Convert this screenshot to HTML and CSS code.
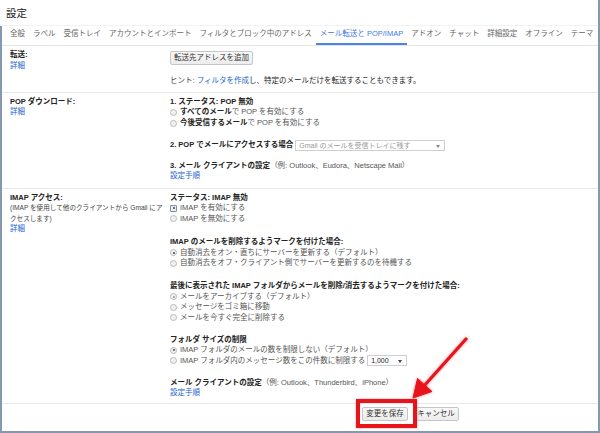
FILE: index.html
```html
<!DOCTYPE html>
<html lang="ja">
<head>
<meta charset="utf-8">
<title>設定</title>
<link rel="stylesheet" href="styles.css">
</head>
<body>
<div class="page">
  <header class="title">設定</header>
  <div class="frame">
    <nav class="tabs">
      <span class="tab">全般</span>
      <span class="tab">ラベル</span>
      <span class="tab">受信トレイ</span>
      <span class="tab">アカウントとインポート</span>
      <span class="tab">フィルタとブロック中のアドレス</span>
      <span class="tab active">メール転送と POP/IMAP</span>
      <span class="tab">アドオン</span>
      <span class="tab">チャット</span>
      <span class="tab">詳細設定</span>
      <span class="tab">オフライン</span>
      <span class="tab">テーマ</span>
    </nav>

    <section class="row row-fwd">
      <div class="label">
        <b>転送:</b>
        <a class="link">詳細</a>
      </div>
      <div class="content">
        <button class="btn btn-add">転送先アドレスを追加</button>
        <p class="hint">ヒント: <a class="link">フィルタを作成</a><span class="dark">し、特定のメールだけを転送することもできます。</span></p>
      </div>
    </section>

    <section class="row row-pop">
      <div class="label">
        <b>POP ダウンロード:</b>
        <a class="link">詳細</a>
      </div>
      <div class="content">
        <p class="line"><b>1. ステータス: POP 無効</b></p>
        <p class="opt"><span class="radio"></span><b>すべてのメール</b>で POP を有効にする</p>
        <p class="opt"><span class="radio"></span><b>今後受信するメール</b>で POP を有効にする</p>
        <p class="line sel-line"><b>2. POP でメールにアクセスする場合</b><span class="select select-pop">Gmail のメールを受信トレイに残す<i class="caret"></i></span></p>
        <p class="line client"><b>3. メール クライアントの設定</b><span class="note">（例: Outlook、Eudora、Netscape Mail）</span></p>
        <a class="link">設定手順</a>
      </div>
    </section>

    <section class="row row-imap">
      <div class="label">
        <b>IMAP アクセス:</b>
        <span class="desc">(IMAP を使用して他のクライアントから Gmail にアクセスします)</span>
        <a class="link">詳細</a>
      </div>
      <div class="content">
        <div class="group">
          <p class="line"><b>ステータス: IMAP 無効</b></p>
          <p class="opt"><span class="radio on focus"></span>IMAP を有効にする</p>
          <p class="opt"><span class="radio"></span>IMAP を無効にする</p>
        </div>
        <div class="group g2">
          <p class="line"><b>IMAP のメールを削除するようマークを付けた場合:</b></p>
          <p class="opt"><span class="radio on"></span>自動消去をオン・直ちにサーバーを更新する（デフォルト）</p>
          <p class="opt"><span class="radio"></span>自動消去をオフ・クライアント側でサーバーを更新するのを待機する</p>
        </div>
        <div class="group g3">
          <p class="line"><b>最後に表示された IMAP フォルダからメールを削除/消去するようマークを付けた場合:</b></p>
          <p class="opt"><span class="radio on dim"></span>メールをアーカイブする（デフォルト）</p>
          <p class="opt"><span class="radio"></span>メッセージをゴミ箱に移動</p>
          <p class="opt"><span class="radio"></span>メールを今すぐ完全に削除する</p>
        </div>
        <div class="group g4">
          <p class="line"><b>フォルダ サイズの制限</b></p>
          <p class="opt"><span class="radio on"></span>IMAP フォルダのメールの数を制限しない（デフォルト）</p>
          <p class="opt"><span class="radio"></span>IMAP フォルダ内のメッセージ数をこの件数に制限する<span class="select select-num">1,000<i class="caret"></i></span></p>
        </div>
        <div class="group g5">
          <p class="line"><b>メール クライアントの設定</b><span class="note">（例: Outlook、Thunderbird、iPhone）</span></p>
          <a class="link">設定手順</a>
        </div>
      </div>
    </section>

    <div class="actions">
      <button class="btn btn-save">変更を保存</button>
      <button class="btn btn-cancel">キャンセル</button>
    </div>
  </div>

  <div class="highlight"></div>
  <svg class="arrow" width="600" height="433" viewBox="0 0 600 433">
    <g fill="#e8141c" stroke="#e8141c" stroke-linejoin="round">
      <line x1="466" y1="339" x2="424" y2="386" stroke-width="3.2" stroke-linecap="round"/>
      <polygon points="413,398 417.5,378.5 432,391.5" stroke-width="1"/>
    </g>
  </svg>
</div>
</body>
</html>
```

FILE: styles.css
```css
* {
  box-sizing: border-box;
}

html, body {
  margin: 0;
  padding: 0;
  background: #fff;
}

body {
  font-family: "Liberation Sans", "Noto Sans CJK JP", sans-serif;
  font-size: 7.5px;
  line-height: 10.5px;
  color: #222;
}

p {
  margin: 0;
}

b {
  font-weight: bold;
  color: #222;
}

.page {
  position: relative;
  width: 600px;
  height: 433px;
  overflow: hidden;
  border-right: 2px solid #8499b0;
  border-bottom: 2px solid #8499b0;
}

.title {
  height: 26px;
  padding-left: 6px;
  font-size: 10.5px;
  line-height: 27px;
  color: #222;
  border-bottom: 1px solid #f2f2f2;
}

.frame {
  height: 405px;
  border-left: 2px solid #8499b0;
}

.tabs {
  display: flex;
  height: 20px;
  padding-left: 4px;
  border-bottom: 1px solid #e4e4e4;
  white-space: nowrap;
}

.tab {
  height: 19px;
  padding: 3px 4px 0;
  color: #666;
}

.tab.active {
  color: #3f7be6;
  border-bottom: 2px solid #4a86e8;
}

.row {
  display: flex;
  padding: 4px 0 0 8px;
  border-bottom: 1px solid #e8e8e8;
}

.label {
  display: flex;
  flex-direction: column;
  align-items: flex-start;
  width: 160px;
  flex: none;
}

.content {
  display: flex;
  flex-direction: column;
  align-items: flex-start;
  flex: 1;
  min-width: 0;
}

.link {
  color: #1a5fcf;
  text-decoration: none;
  cursor: pointer;
}

.desc {
  width: 158px;
  font-size: 6.6px;
  line-height: 10.7px;
  color: #444;
}

.row-fwd {
  padding-bottom: 5px;
}

.row-pop {
  padding-bottom: 6px;
}

.row-imap {
  padding-bottom: 4.5px;
}

.btn {
  display: block;
  height: 14px;
  padding: 0 3px;
  font-family: inherit;
  font-size: 7.5px;
  line-height: 12px;
  color: #333;
  background: linear-gradient(#f8f8f8, #ececec);
  border: 1px solid #c6c6c6;
  border-radius: 2px;
  white-space: nowrap;
}

.btn-add {
  margin-top: 1px;
}

.hint {
  margin-top: 11px;
  color: #444;
}

.hint .dark {
  color: #222;
}

.opt {
  display: flex;
  align-items: center;
  height: 10.5px;
  color: #555;
  white-space: nowrap;
}

.row-pop .opt {
  height: 11px;
}

.radio {
  position: relative;
  flex: none;
  width: 7px;
  height: 7px;
  margin-right: 3px;
  border: 1px solid #b9b9b9;
  border-radius: 50%;
  background: #f1f1f1;
}

.radio.on::after {
  content: "";
  position: absolute;
  left: 1.5px;
  top: 1.5px;
  width: 2px;
  height: 2px;
  border-radius: 50%;
  background: #444;
}

.radio.dim::after {
  background: #999;
}

.radio.focus {
  border-radius: 1px;
  border-color: #7f8ea3;
  background: #e9edf3;
}

.line {
  white-space: nowrap;
}

.sel-line {
  display: flex;
  align-items: center;
  height: 11px;
  margin-top: 11px;
}

.client {
  margin-top: 9.5px;
}

.note {
  color: #555;
}

.select {
  position: relative;
  display: inline-flex;
  align-items: center;
  height: 11px;
  padding-left: 3px;
  border: 1px solid #cfcfcf;
  background: #fff;
  color: #999;
  font-size: 7px;
  line-height: 9px;
}

.select-pop {
  width: 150px;
  margin-left: 2px;
}

.select-num {
  width: 40px;
  margin-left: 2px;
  color: #222;
}

.caret {
  position: absolute;
  right: 4px;
  top: 3.5px;
  width: 0;
  height: 0;
  border-left: 2px solid transparent;
  border-right: 2px solid transparent;
  border-top: 3px solid #444;
}

.select-pop .caret {
  border-top-color: #888;
}

.group {
  display: flex;
  flex-direction: column;
  align-items: flex-start;
}

.g2 {
  margin-top: 13px;
}

.g3 {
  margin-top: 12.5px;
}

.g4,
.g5 {
  margin-top: 11.5px;
}

.actions {
  display: flex;
  gap: 5px;
  padding: 3px 0 0 360px;
}

.btn-save,
.btn-cancel {
  width: 46px;
  padding: 0;
  text-align: center;
}

.highlight {
  position: absolute;
  left: 356px;
  top: 399px;
  width: 61px;
  height: 29px;
  border: 4px solid #e8141c;
  box-shadow: 0 0 2px rgba(232, 20, 28, 0.45);
}

.arrow {
  position: absolute;
  left: 0;
  top: 0;
  pointer-events: none;
  filter: drop-shadow(0 0 1.5px rgba(232, 20, 28, 0.5));
}
```
